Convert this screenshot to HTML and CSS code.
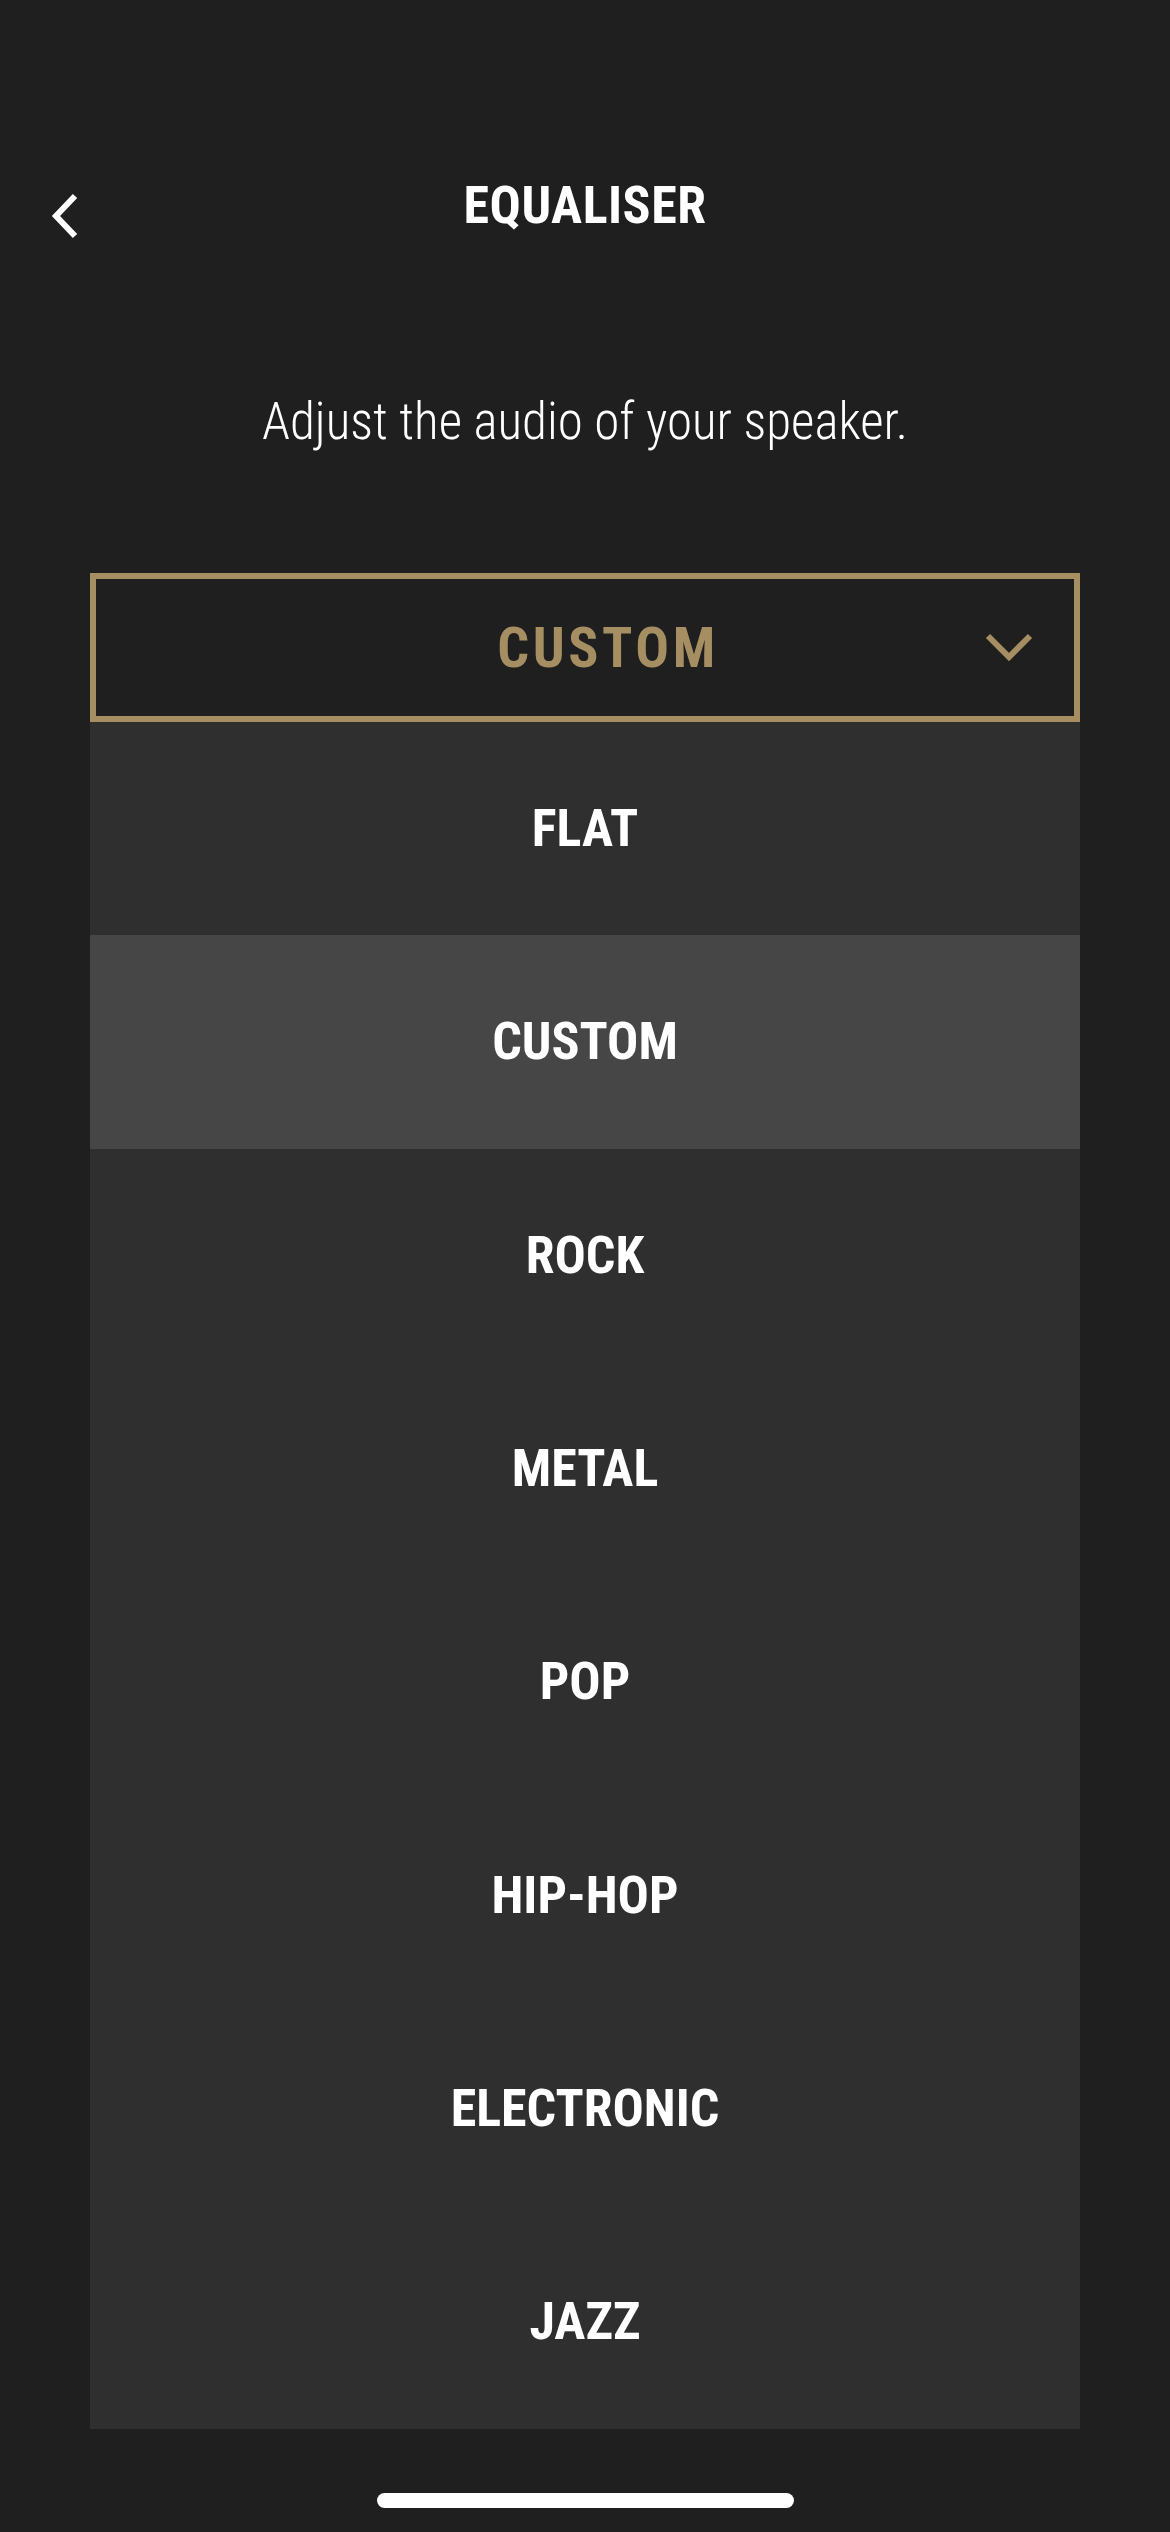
FILE: index.html
```html
<!DOCTYPE html>
<html lang="en">
<head>
<meta charset="utf-8">
<title>Equaliser</title>
<link rel="stylesheet" href="styles.css">
</head>
<body>
<div class="screen">
  <header class="topbar">
    <div class="back">
      <svg class="back-icon" width="30" height="46" viewBox="0 0 30 46">
        <polyline points="25,3 6,23 25,43" fill="none" stroke="#ffffff" stroke-width="6" stroke-linejoin="miter" stroke-linecap="butt"/>
      </svg>
    </div>
    <h1 class="title">EQUALISER</h1>
    <div class="spacer"></div>
  </header>

  <p class="subtitle">Adjust the audio of your speaker.</p>

  <div class="dropdown">
    <span class="dropdown-label">CUSTOM</span>
    <svg class="dropdown-chevron" width="48" height="28" viewBox="0 0 48 28">
      <polyline points="3,3 24,24 45,3" fill="none" stroke="#a68e63" stroke-width="6" stroke-linejoin="miter" stroke-linecap="butt"/>
    </svg>
  </div>

  <ul class="options">
    <li class="option">FLAT</li>
    <li class="option option-selected">CUSTOM</li>
    <li class="option">ROCK</li>
    <li class="option">METAL</li>
    <li class="option">POP</li>
    <li class="option">HIP-HOP</li>
    <li class="option">ELECTRONIC</li>
    <li class="option">JAZZ</li>
  </ul>

  <div class="home-bar"></div>
</div>
</body>
</html>
```
FILE: styles.css
```css
html, body {
  margin: 0;
  padding: 0;
  background: #1f1f1f;
}

.screen {
  width: 1170px;
  height: 2532px;
  display: flex;
  flex-direction: column;
  align-items: center;
  font-family: "Roboto Condensed", "Roboto", sans-serif;
  color: #ffffff;
  overflow: hidden;
}

.topbar {
  margin-top: 166px;
  width: 100%;
  height: 80px;
  display: grid;
  grid-template-columns: 1fr auto 1fr;
  align-items: center;
}

.back {
  padding-left: 50px;
  padding-top: 20px;
  display: flex;
  align-items: center;
}

.back-icon {
  display: block;
}

.title {
  margin: 0;
  font-size: 52px;
  font-weight: 700;
  letter-spacing: 0.5px;
  line-height: 80px;
}

.subtitle {
  margin: 146px 0 0;
  font-size: 51px;
  font-weight: 300;
  line-height: 60px;
  height: 60px;
  text-align: center;
}

.dropdown {
  margin-top: 121px;
  width: 990px;
  height: 149px;
  box-sizing: border-box;
  border: 6px solid #a68e63;
  display: flex;
  align-items: center;
  position: relative;
}

.dropdown-label {
  flex: 1;
  text-align: center;
  padding-left: 46px;
  font-size: 56px;
  font-weight: 700;
  letter-spacing: 3.6px;
  color: #a68e63;
}

.dropdown-chevron {
  position: absolute;
  right: 41px;
  top: 54px;
}

.options {
  list-style: none;
  margin: 0;
  padding: 0;
  width: 990px;
  background: #2f2f2f;
}

.option {
  height: 213.33px;
  display: flex;
  align-items: center;
  justify-content: center;
  font-size: 52px;
  font-weight: 700;
  color: #ffffff;
}

.option-selected {
  background: #464646;
}

.home-bar {
  margin-top: 64px;
  width: 417px;
  height: 15px;
  border-radius: 8px;
  background: #ffffff;
}
```
